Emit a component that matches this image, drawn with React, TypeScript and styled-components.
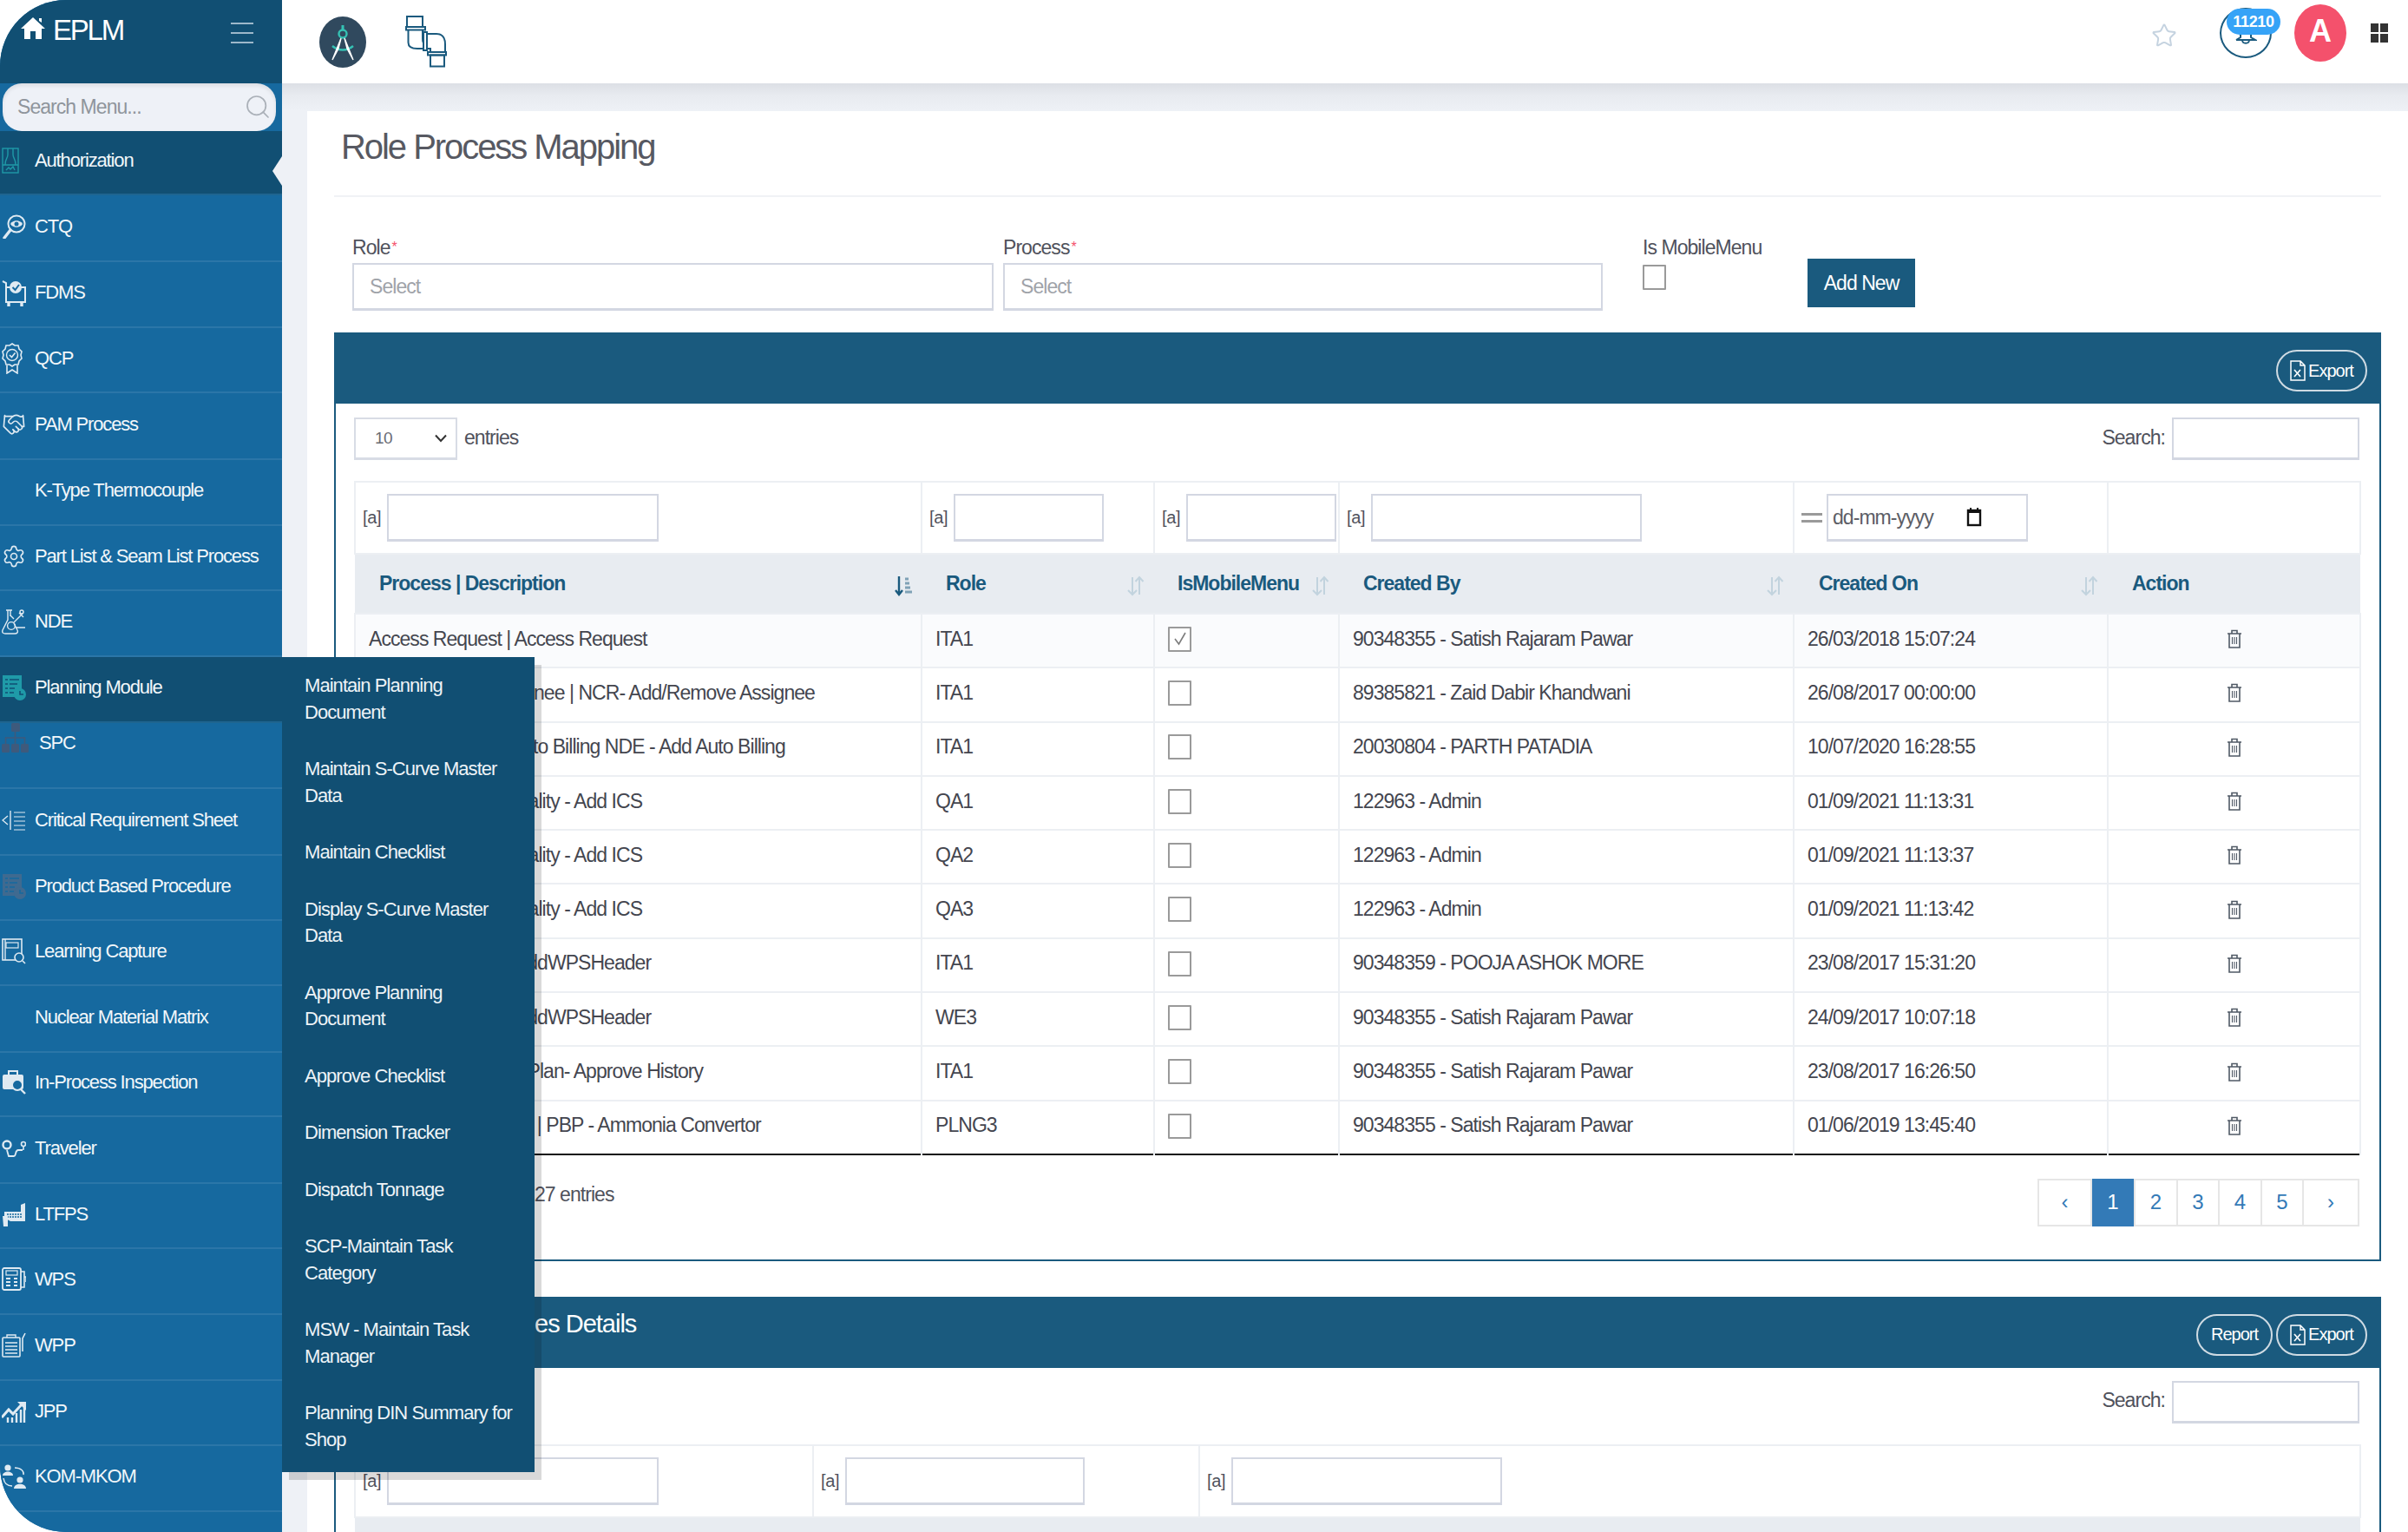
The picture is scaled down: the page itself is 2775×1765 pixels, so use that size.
import React from "react";
import styled, { createGlobalStyle } from "styled-components";
import { Handshake, Search, Settings, Star } from "lucide-react";

const Global = createGlobalStyle`
  html, body { margin: 0; padding: 0; width: 2775px; height: 1765px; overflow: hidden; background: #fff; }
  body, input, button { font-family: "Liberation Sans", Arial, sans-serif; }
  * { box-sizing: border-box; }
`;

const DARK = "#114f73";
const ITEM = "#16699f";
const BAND = "#1a5a7e";

const Page = styled.div`
  display: grid;
  grid-template-columns: 325px 1fr;
  width: 2775px;
  height: 1765px;
  overflow: hidden;
  background: #fff;
`;

/* ---------- sidebar ---------- */
const Sidebar = styled.aside`
  position: relative;
  z-index: 5;
  width: 325px;
  height: 1765px;
`;
const SideInner = styled.div`
  width: 325px;
  height: 1765px;
  overflow: hidden;
  border-radius: 76px 0 0 76px;
  background: ${ITEM};
  display: flex;
  flex-direction: column;
`;
const Brand = styled.div`
  height: 96px;
  flex: none;
  background: ${DARK};
  display: flex;
  align-items: flex-start;
  padding: 19px 33px 0 24px;
  color: #fff;
`;
const BrandName = styled.span`
  font-size: 33px;
  line-height: 32px;
  letter-spacing: -2.2px;
  margin-left: 9px;
  flex: 1;
`;
const Burger = styled.div`
  width: 26px;
  margin-top: 7px;
  display: flex;
  flex-direction: column;
  gap: 9px;
  & > i { display: block; height: 2px; background: #9db8ca; }
`;
const SearchStrip = styled.div`
  height: 55px;
  flex: none;
  padding: 0 7px 0 3px;
  position: relative;
`;
const SearchInput = styled.input`
  width: 100%;
  height: 55px;
  border: 0;
  outline: 0;
  border-radius: 22px;
  background: #eef1f7;
  box-shadow: inset 0 3px 4px rgba(0, 0, 0, 0.08);
  padding: 0 50px 0 17px;
  font-size: 23px;
  letter-spacing: -0.95px;
  &::placeholder { color: #8f959c; opacity: 1; }
`;
const SearchGlass = styled.span`
  position: absolute;
  right: 12px;
  top: 11px;
  color: #aab0b8;
  display: flex;
`;
const Item = styled.div<{ $active?: boolean; $top?: boolean; $h: number }>`
  position: relative;
  flex: none;
  height: ${(p) => p.$h}px;
  background: ${(p) => (p.$active ? DARK : ITEM)};
  border-bottom: 2px solid ${(p) => (p.$active ? "#1f6590" : "#2b76a8")};
  display: flex;
  align-items: ${(p) => (p.$top ? "flex-start" : "center")};
  padding: 0 0 ${(p) => (p.$top ? 0 : 4)}px 2px;
  color: #f2f7fa;
  font-size: 22px;
  letter-spacing: -1.15px;
`;
const IconSlot = styled.span<{ $wide?: boolean }>`
  width: ${(p) => (p.$wide ? 43 : 38)}px;
  flex: none;
  display: flex;
  align-items: center;
`;
const SpcLabel = styled.span`
  margin-top: 10px;
  line-height: 25px;
`;
const Notch = styled.i`
  position: absolute;
  right: 0;
  top: 29px;
  width: 11px;
  height: 34px;
  background: #eef1f6;
  clip-path: polygon(100% 0, 0 50%, 100% 100%);
`;
const Flyout = styled.nav`
  position: absolute;
  left: 325px;
  top: 757px;
  width: 291px;
  height: 939px;
  background: ${DARK};
  box-shadow: 8px 9px 0 rgba(0, 0, 0, 0.15);
  padding: 18px 0 0 26px;
  z-index: 6;
`;
const FlyLink = styled.div`
  width: 240px;
  padding-bottom: 35px;
  font-size: 22px;
  line-height: 30.5px;
  letter-spacing: -0.95px;
  color: #edf3f7;
`;

/* ---------- main ---------- */
const Main = styled.main`
  display: flex;
  flex-direction: column;
  min-width: 0;
  height: 1765px;
`;
const Topbar = styled.header`
  height: 96px;
  flex: none;
  display: flex;
  align-items: center;
  padding: 0 23px 0 43px;
  background: #fff;
  position: relative;
  z-index: 2;
`;
const TopLeft = styled.div`
  display: flex;
  align-items: center;
  gap: 45px;
  flex: 1;
`;
const TopRight = styled.div`
  display: flex;
  align-items: center;
  padding-bottom: 20px;
`;
const StarSlot = styled.span`
  display: flex;
  margin-top: 6px;
`;
const BellRing = styled.div`
  position: relative;
  width: 60px;
  height: 58px;
  margin: 0 26px 0 49px;
  border: 2px solid ${BAND};
  border-radius: 50%;
  display: flex;
  align-items: flex-end;
  justify-content: center;
  padding-bottom: 14px;
`;
const Badge = styled.span`
  position: absolute;
  left: 6px;
  top: -1px;
  width: 62px;
  height: 30px;
  border-radius: 15px;
  background: #36a3f7;
  color: #fff;
  font-size: 18px;
  font-weight: 700;
  letter-spacing: -0.3px;
  line-height: 30px;
  text-align: center;
`;
const Avatar = styled.div`
  width: 60px;
  height: 66px;
  border-radius: 50%;
  background: #f4516c;
  color: #fff;
  font-size: 36px;
  font-weight: 700;
  line-height: 62px;
  text-align: center;
  margin-right: 28px;
`;
const Squares = styled.div`
  width: 20px;
  height: 22px;
  display: grid;
  grid-template: 1fr 1fr / 1fr 1fr;
  gap: 2px;
  & > i { background: #333; display: block; }
`;
const Canvas = styled.div`
  flex: 1;
  min-height: 0;
  background: linear-gradient(#dcdfe5 0, #e8ebf0 14px, #eef1f6 32px);
  padding: 32px 0 0 29px;
`;
const Card = styled.div`
  background: #fff;
  height: 100%;
  padding: 0 31px 0 31px;
  overflow: hidden;
`;
const Title = styled.h1`
  margin: 0;
  height: 99px;
  padding: 20px 0 0 8px;
  border-bottom: 2px solid #f0f2f5;
  font-size: 40px;
  line-height: 42px;
  font-weight: 400;
  letter-spacing: -2.05px;
  color: #575962;
`;
const FormRow = styled.div`
  height: 156px;
  padding: 45px 0 0 21px;
  display: flex;
`;
const Field = styled.div<{ $w: number; $mr: number }>`
  width: ${(p) => p.$w}px;
  margin-right: ${(p) => p.$mr}px;
  flex: none;
`;
const Label = styled.div<{ $h?: number }>`
  height: ${(p) => p.$h ?? 31}px;
  font-size: 23px;
  line-height: 26px;
  letter-spacing: -0.95px;
  color: #50525c;
`;
const Req = styled.span`
  color: #f4516c;
  font-size: 16px;
  vertical-align: 3px;
  margin-left: 2px;
`;
const BaseInput = styled.input`
  display: block;
  border: 2px solid #d3d7e2;
  border-bottom-width: 3px;
  background: #fff;
  outline: 0;
  font-size: 23px;
  letter-spacing: -0.95px;
  &::placeholder { color: #a0a3a9; opacity: 1; }
`;
const SelectInput = styled(BaseInput)`
  width: 100%;
  height: 55px;
  padding: 0 18px;
`;
const Check = styled.span`
  display: inline-flex;
  align-items: center;
  justify-content: center;
  width: 27px;
  height: 29px;
  border: 2px solid #9a9a9a;
  border-radius: 1px;
  background: #fff;
  vertical-align: middle;
`;
const AddButton = styled.button`
  width: 124px;
  height: 56px;
  margin-top: 26px;
  flex: none;
  border: 0;
  background: ${BAND};
  color: #fff;
  font-size: 23px;
  letter-spacing: -0.95px;
`;
const Panel = styled.section<{ $gap?: number }>`
  margin-top: ${(p) => p.$gap ?? 0}px;
  width: 2359px;
`;
const PanelHead = styled.div`
  height: 82px;
  background: ${BAND};
  display: flex;
  align-items: center;
  justify-content: flex-end;
  gap: 4px;
  padding: 6px 16px 0 52px;
`;
const PanelTitle = styled.h2`
  margin: 0 auto 26px 0;
  font-size: 29px;
  line-height: 34px;
  font-weight: 400;
  letter-spacing: -1px;
  color: #fff;
`;
const Pill = styled.button<{ $w: number }>`
  width: ${(p) => p.$w}px;
  height: 48px;
  border: 2px solid #cfdbe3;
  border-radius: 24px;
  background: transparent;
  color: #fff;
  font-size: 20px;
  letter-spacing: -1px;
  display: inline-flex;
  align-items: center;
  justify-content: center;
  gap: 3px;
  padding: 0;
`;
const PanelBody = styled.div<{ $top: number }>`
  border: 2px solid ${BAND};
  border-top: 0;
  padding: ${(p) => p.$top}px 23px 38px 21px;
`;
const Controls = styled.div`
  height: 49px;
  display: flex;
  align-items: center;
  justify-content: space-between;
  margin-bottom: 24px;
  font-size: 23px;
  letter-spacing: -0.95px;
  color: #50525c;
`;
const ControlText = styled.span`
  margin-bottom: 3px;
`;
const Group = styled.div`
  display: flex;
  align-items: center;
  gap: 8px;
`;
const EntrySelect = styled.div`
  width: 119px;
  height: 49px;
  border: 2px solid #d8dce5;
  border-bottom-width: 3px;
  display: flex;
  align-items: center;
  justify-content: space-between;
  padding: 0 10px 0 22px;
  font-size: 19px;
  letter-spacing: -0.5px;
  color: #6a6c75;
`;
const SearchBox = styled(BaseInput)`
  width: 216px;
  height: 49px;
`;
const Table = styled.table`
  width: 2311px;
  table-layout: fixed;
  border-collapse: collapse;
  font-size: 23px;
  letter-spacing: -0.95px;
  color: #44464f;
`;
const Col = styled.col<{ $w: number }>`
  width: ${(p) => p.$w}px;
`;
const FilterRow = styled.tr`
  height: 83px;
`;
const FilterCell = styled.td`
  border: 2px solid #eceff3;
  padding: 0 0 0 8px;
`;
const FilterInner = styled.div<{ $gap?: number }>`
  display: flex;
  align-items: center;
  gap: ${(p) => p.$gap ?? 7}px;
  font-size: 20px;
  letter-spacing: -0.4px;
  color: #50525c;
`;
const FilterInput = styled(BaseInput)<{ $w: number }>`
  width: ${(p) => p.$w}px;
  height: 55px;
`;
const DateBox = styled.div`
  width: 232px;
  height: 55px;
  border: 2px solid #d3d7e2;
  border-bottom-width: 3px;
  display: flex;
  align-items: center;
  padding-left: 5px;
  gap: 38px;
  font-size: 23px;
  letter-spacing: -0.95px;
  color: #5c5e66;
`;
const Equal = styled.span`
  width: 24px;
  height: 11px;
  border-top: 3px solid #9a9a9a;
  border-bottom: 3px solid #9a9a9a;
`;
const HeadRow = styled.tr`
  height: 69px;
  background: #e8ecf1;
`;
const Th = styled.th<{ $pl: number }>`
  position: relative;
  padding: 0 0 1px ${(p) => p.$pl}px;
  text-align: left;
  color: ${BAND};
  font-weight: 700;
  letter-spacing: -1px;
`;
const SortIcon = styled.span`
  position: absolute;
  right: 11px;
  top: 24px;
  display: flex;
`;
const BodyRow = styled.tr<{ $first?: boolean; $last?: boolean }>`
  height: 62.3px;
  background: ${(p) => (p.$first ? "#fafbfd" : "#fff")};
  ${(p) => (p.$last ? "border-bottom: 2px solid #111;" : "")}
`;
const Td = styled.td<{ $center?: boolean }>`
  border-left: 2px solid #eceff3;
  border-right: 2px solid #eceff3;
  border-top: 2px solid #eceff3;
  padding: 0 0 4px 15px;
  white-space: nowrap;
  overflow: hidden;
  ${(p) => (p.$center ? "padding: 0 0 4px 0;" : "")}
`;
const TrashSlot = styled.span`
  display: flex;
  justify-content: center;
`;
const Footer = styled.div`
  margin-top: 27px;
  height: 55px;
  display: flex;
  align-items: flex-start;
  justify-content: space-between;
  font-size: 23px;
  letter-spacing: -0.95px;
  color: #50525c;
`;
const Info = styled.div`
  margin-top: 5px;
`;
const Pager = styled.div`
  display: flex;
  height: 55px;
  border: 2px solid #e6e6e6;
`;
const PageCell = styled.div<{ $w: number; $on?: boolean }>`
  width: ${(p) => p.$w}px;
  display: flex;
  align-items: center;
  justify-content: center;
  font-size: 24px;
  letter-spacing: 0;
  color: ${(p) => (p.$on ? "#fff" : "#337ab7")};
  background: ${(p) => (p.$on ? "#337ab7" : "#fff")};
  border-right: 2px solid #e6e6e6;
  margin: ${(p) => (p.$on ? "-2px 0" : "0")};
  &:last-child { border-right: 0; }
`;
const HeadFill = styled.tr`
  height: 60px;
  background: #e8ecf1;
`;

/* ---------- icons ---------- */
const W = "#dfeaf2";
const TEAL = "#1f9aa8";

const Svg: React.FC<{ w?: number; h?: number; vb?: string; children: React.ReactNode }> = ({
  w = 28,
  h = 28,
  vb,
  children,
}) => (
  <svg width={w} height={h} viewBox={vb ?? `0 0 ${w} ${h}`} fill="none" style={{ display: "block" }}>
    {children}
  </svg>
);

const HomeIcon = () => (
  <Svg w={28} h={26}>
    <path d="M14 1 L28 14 H24 V26 H17 V17 H11 V26 H4 V14 H0 Z" fill="#fff" />
    <path d="M21 2 H24 V7 L21 5 Z" fill="#fff" />
  </Svg>
);
const AuthIcon = () => (
  <Svg w={20} h={30}>
    <g stroke={TEAL} strokeWidth="1.4">
      <rect x="1" y="1" width="18" height="28" />
      <path d="M7 1 V8 C7 13 4 12 4 20 M13 1 V8 C13 13 16 12 16 20 M1 20 H19" />
      <path d="M5 26 L8 23 L10 25 L13 22 L15 26" />
    </g>
  </Svg>
);
const CtqIcon = () => (
  <Svg>
    <circle cx="17" cy="11" r="9.5" stroke={W} strokeWidth="2" />
    <path d="M10 11 C13 6 21 6 24 11 C21 16 13 16 10 11 Z" fill={W} />
    <circle cx="17" cy="11" r="2.5" fill={ITEM} />
    <path d="M10 18 L3 27" stroke={W} strokeWidth="3.4" strokeLinecap="round" />
  </Svg>
);
const FdmsIcon = () => (
  <Svg h={32}>
    <path d="M1 3 L5 5 V27 H27 V10 H22 M11 10 H5" stroke={W} strokeWidth="2" />
    <circle cx="16" cy="10" r="7" fill={W} />
    <path d="M12.5 10 L15.5 13 L20 7" stroke={ITEM} strokeWidth="2" />
    <path d="M8 28 V32 M23 28 V32" stroke={W} strokeWidth="3.4" />
  </Svg>
);
const QcpIcon = () => (
  <Svg w={24} h={36} vb="0 0 24 36">
    <path d="M12 1 L15 3 L19 3 L20 7 L23 10 L22 14 L23 18 L20 21 L19 25 L15 25 L12 27 L9 25 L5 25 L4 21 L1 18 L2 14 L1 10 L4 7 L5 3 L9 3 Z" stroke={W} strokeWidth="1.6" />
    <circle cx="12" cy="14" r="6.5" stroke={W} strokeWidth="1.4" />
    <path d="M9 14 L11.5 16.5 L15.5 11.5" stroke={W} strokeWidth="1.6" />
    <path d="M6 26 V35 L12 31 L18 35 V26" stroke={W} strokeWidth="1.6" />
  </Svg>
);
const NdeIcon = () => (
  <Svg h={30}>
    <g stroke={W} strokeWidth="1.4">
      <path d="M5 2 H12 M7 2 V13 L1 25 C0 28 2 29 4 29 H15 C18 29 19 27 18 25 L14 17 M10 2 V9" />
      <circle cx="11" cy="20" r="4.4" />
      <path d="M14 16 L24 6 M20 5 L25 10 M16 22 H27 M14 12 L10 8" />
      <circle cx="23" cy="4" r="2" />
    </g>
  </Svg>
);
const CriticalIcon = () => (
  <Svg>
    <path d="M7 9 L1 14 L7 19" stroke={W} strokeWidth="1.4" />
    <path d="M10 3 V25" stroke={W} strokeWidth="1.4" />
    <path d="M14 5 H27 M14 10 H27 M14 15 H27 M14 20 H27 M14 25 H27" stroke={W} strokeWidth="1.2" />
  </Svg>
);
const DocClock: React.FC<{ c: string; bg: string }> = ({ c, bg }) => (
  <Svg h={30}>
    <rect x="1" y="1" width="22" height="25" fill={c} />
    <path d="M4 6 H7 M9 6 H20 M4 11 H7 M9 11 H18 M4 16 H7 M9 16 H15 M4 21 H7 M9 21 H14" stroke={bg} strokeWidth="1.6" />
    <circle cx="21" cy="23" r="7" fill={c} />
    <path d="M21 19 V23 H25" stroke={bg} strokeWidth="1.6" />
  </Svg>
);
const SpcIcon = () => (
  <Svg w={31} h={34}>
    <g fill="#3e5a7c">
      <rect x="11" y="0" width="10" height="10" rx="1.5" />
      <rect x="0" y="24" width="9" height="10" rx="1.5" />
      <rect x="11" y="24" width="9" height="10" rx="1.5" />
      <rect x="22" y="24" width="9" height="10" rx="1.5" />
    </g>
    <path d="M15.5 10 V24 M4.5 24 V17 H26.5 V24" stroke="#3e5a7c" strokeWidth="1.6" />
  </Svg>
);
const LearnIcon = () => (
  <Svg h={30}>
    <rect x="1" y="1" width="22" height="24" stroke={W} strokeWidth="1.6" />
    <rect x="5" y="5" width="14" height="6" stroke={W} strokeWidth="1.2" />
    <path d="M4 1 V25" stroke={W} strokeWidth="1.4" />
    <circle cx="20" cy="22" r="5" fill={ITEM} stroke={W} strokeWidth="1.6" />
    <path d="M24 26 L27 29" stroke={W} strokeWidth="1.6" />
  </Svg>
);
const InProcessIcon = () => (
  <Svg h={30}>
    <path d="M8 6 V2 H18 V6" stroke={W} strokeWidth="2" />
    <rect x="1" y="6" width="24" height="17" rx="2" fill={W} />
    <circle cx="18" cy="18" r="6" fill={ITEM} stroke={W} strokeWidth="2" />
    <path d="M22 23 L27 28" stroke={W} strokeWidth="2.4" />
  </Svg>
);
const TravelerIcon = () => (
  <Svg h={24}>
    <circle cx="6" cy="8" r="4.5" stroke={W} strokeWidth="2.4" />
    <path d="M6 14 L8 21 H14 C17 21 15 14 19 14 H24" stroke={W} strokeWidth="1.8" />
    <circle cx="25" cy="7" r="2.5" stroke={W} strokeWidth="1.6" />
    <path d="M25 10 V14" stroke={W} strokeWidth="1.6" />
  </Svg>
);
const LtfpsIcon = () => (
  <Svg h={30}>
    <path d="M3 12 H27 V23 H10 L3 19 Z" fill={W} />
    <path d="M6 15 H24 M6 18 H24" stroke={ITEM} strokeWidth="1.6" strokeDasharray="2 1" />
    <path d="M22 12 V4 L27 2 V12 Z M1 17 H7 V29 H2 Z" fill={W} />
  </Svg>
);
const WpsIcon = () => (
  <Svg h={30}>
    <rect x="1" y="2" width="21" height="25" rx="2" stroke={W} strokeWidth="1.8" />
    <rect x="5" y="5" width="13" height="5" stroke={W} strokeWidth="1.2" />
    <path d="M5 14 H10 M5 18 H10 M5 22 H10 M14 14 H18 M14 18 H18 M14 22 H18" stroke={W} strokeWidth="2" />
    <path d="M22 6 H26 V24 H22 M26 12 H28 V18" stroke={W} strokeWidth="1.6" />
  </Svg>
);
const WppIcon = () => (
  <Svg h={30}>
    <rect x="1" y="6" width="20" height="22" rx="1" stroke={W} strokeWidth="1.6" />
    <path d="M6 6 V3 H16 V6" stroke={W} strokeWidth="1.4" />
    <path d="M4 12 H18 M4 16 H18 M4 20 H18 M4 24 H18" stroke={W} strokeWidth="1.4" />
    <path d="M24 22 V7 L27 1" stroke={W} strokeWidth="1.6" />
  </Svg>
);
const JppIcon = () => (
  <Svg h={26}>
    <path d="M0 20 L8 11 L13 16 L23 5" stroke={W} strokeWidth="3" />
    <path d="M18 2 H28 V12 Z" fill={W} />
    <path d="M7 26 V20 M12 26 V20 M17 26 V15 M22 26 V11 M26 26 V9" stroke={W} strokeWidth="2.4" />
  </Svg>
);
const KomIcon = () => (
  <Svg h={30}>
    <circle cx="7" cy="5" r="3.6" fill={W} />
    <path d="M1 14 C1 8 13 8 13 14 Z" fill={W} />
    <circle cx="21" cy="19" r="3.6" fill={W} />
    <path d="M14 29 C14 22 28 22 28 29 Z" fill={W} />
    <path d="M15 5 C22 5 26 9 25 13 M2 17 C3 24 8 26 12 26" stroke={W} strokeWidth="1.5" />
  </Svg>
);
const CompassBadge = () => (
  <Svg w={54} h={59}>
    <ellipse cx="27" cy="29.5" rx="27" ry="29.5" fill="#30495e" />
    <circle cx="27" cy="20" r="4.5" stroke="#35c2b4" strokeWidth="2.4" />
    <path d="M27 10 V15" stroke="#35c2b4" strokeWidth="3" />
    <path d="M15 34 C22 40 32 40 39 34" stroke="#35c2b4" strokeWidth="2.4" />
    <path d="M25 25 L15 50 L22 37 Z M29 25 L39 50 L32 37 Z" fill="#fff" stroke="#fff" strokeWidth="1.4" />
  </Svg>
);
const PipeIcon = () => (
  <Svg w={48} h={60}>
    <g stroke={BAND} strokeWidth="2">
      <rect x="2" y="1" width="18" height="12" />
      <rect x="1" y="13" width="22" height="3.5" />
      <path d="M3.5 16.5 V31 Q3.5 38 14 38 H21 M20 16.5 V26 Q20 31 21 31" />
      <rect x="21" y="19" width="4" height="21" />
      <path d="M25 21 H36 Q46 21 46 33 V42 M25 38 H29 V42" />
      <rect x="26" y="42" width="21" height="3.5" />
      <rect x="29" y="45.5" width="16" height="13" />
    </g>
  </Svg>
);
const BellIcon = () => (
  <Svg w={26} h={16}>
    <path d="M2 11 H24 L19 8 V3 M7 3 V8 L2 11" stroke={BAND} strokeWidth="2" />
    <path d="M9 11 C9 16 17 16 17 11" stroke={BAND} strokeWidth="1.8" />
  </Svg>
);
const ExcelIcon = () => (
  <Svg w={18} h={24}>
    <path d="M1 1 H12 L17 6 V23 H1 Z M12 1 V6 H17" stroke="#fff" strokeWidth="1.5" />
    <path d="M5 11 L12 19 M12 11 L5 19" stroke="#fff" strokeWidth="1.6" />
  </Svg>
);
const TrashIcon = () => (
  <Svg w={16} h={22}>
    <g stroke="#505a66" strokeWidth="1.6">
      <path d="M0 5 H16 M5 5 V1.5 H11 V5" />
      <path d="M2 5 V21 H14 V5" />
      <path d="M5.5 9 V17 M8 9 V17 M10.5 9 V17" strokeWidth="1.1" />
    </g>
  </Svg>
);
const SortIdle = () => (
  <Svg w={20} h={24}>
    <g stroke="#c2d3de" strokeWidth="2">
      <path d="M6 2 V22 M1 17 L6 22 L11 17" />
      <path d="M14 22 V2 M9.5 7 L14 2 L18.5 7" />
    </g>
  </Svg>
);
const SortActive = () => (
  <Svg w={20} h={24}>
    <path d="M5 1 V22 M1 17 L5 22 L9 17" stroke={BAND} strokeWidth="2.4" />
    <path d="M12 4 H16 M12 9 H17 M12 14 H18 M12 19 H20" stroke="#7fa1b6" strokeWidth="3" />
  </Svg>
);
const TickIcon = () => (
  <Svg w={18} h={18}>
    <path d="M3 9 L7.5 15 L15 2" stroke="#7c7c7c" strokeWidth="1.6" />
  </Svg>
);
const Chevron = () => (
  <Svg w={14} h={10}>
    <path d="M1 1.5 L7 8 L13 1.5" stroke="#333" strokeWidth="2" />
  </Svg>
);
const CalendarIcon = () => (
  <Svg w={18} h={22}>
    <rect x="2" y="3" width="14" height="17" stroke="#111" strokeWidth="2.4" fill="#fff" />
    <path d="M2 4 H16" stroke="#111" strokeWidth="4" />
    <path d="M5 0 V3 M13 0 V3" stroke="#111" strokeWidth="2" />
  </Svg>
);

const stroke = { color: W, strokeWidth: 1.4 };
const nav: { label: string; icon?: React.ReactNode; active?: boolean; top?: boolean; h: number }[] = [
  { label: "Authorization", icon: <AuthIcon />, active: true, h: 74 },
  { label: "CTQ", icon: <CtqIcon />, h: 77 },
  { label: "FDMS", icon: <FdmsIcon />, h: 76 },
  { label: "QCP", icon: <QcpIcon />, h: 75 },
  { label: "PAM Process", icon: <Handshake size={28} {...stroke} />, h: 77 },
  { label: "K-Type Thermocouple", h: 76 },
  { label: "Part List & Seam List Process", icon: <Settings size={28} {...stroke} />, h: 75 },
  { label: "NDE", icon: <NdeIcon />, h: 76 },
  { label: "Planning Module", icon: <DocClock c={TEAL} bg={DARK} />, active: true, h: 76 },
  { label: "SPC", icon: <SpcIcon />, top: true, h: 76 },
  { label: "Critical Requirement Sheet", icon: <CriticalIcon />, h: 77 },
  { label: "Product Based Procedure", icon: <DocClock c="#3f6a90" bg={ITEM} />, h: 75 },
  { label: "Learning Capture", icon: <LearnIcon />, h: 75 },
  { label: "Nuclear Material Matrix", h: 77 },
  { label: "In-Process Inspection", icon: <InProcessIcon />, h: 74 },
  { label: "Traveler", icon: <TravelerIcon />, h: 77 },
  { label: "LTFPS", icon: <LtfpsIcon />, h: 75 },
  { label: "WPS", icon: <WpsIcon />, h: 76 },
  { label: "WPP", icon: <WppIcon />, h: 76 },
  { label: "JPP", icon: <JppIcon />, h: 75 },
  { label: "KOM-MKOM", icon: <KomIcon />, h: 76 },
  { label: "", h: 76 },
];

const fly = [
  "Maintain Planning Document",
  "Maintain S-Curve Master Data",
  "Maintain Checklist",
  "Display S-Curve Master Data",
  "Approve Planning Document",
  "Approve Checklist",
  "Dimension Tracker",
  "Dispatch Tonnage",
  "SCP-Maintain Task Category",
  "MSW - Maintain Task Manager",
  "Planning DIN Summary for Shop",
];

const rows = [
  ["Access Request | Access Request", "ITA1", true, "90348355 - Satish Rajaram Pawar", "26/03/2018 15:07:24"],
  ["Add / Remove Assignee | NCR- Add/Remove Assignee", "ITA1", false, "89385821 - Zaid Dabir Khandwani", "26/08/2017 00:00:00"],
  ["NDE Billing | Add Auto Billing NDE - Add Auto Billing", "ITA1", false, "20030804 - PARTH PATADIA", "10/07/2020 16:28:55"],
  ["Add ICS Quality Quality - Add ICS", "QA1", false, "122963 - Admin", "01/09/2021 11:13:31"],
  ["Add ICS Quality Quality - Add ICS", "QA2", false, "122963 - Admin", "01/09/2021 11:13:37"],
  ["Add ICS Quality Quality - Add ICS", "QA3", false, "122963 - Admin", "01/09/2021 11:13:42"],
  ["AddWPSHeader |AddWPSHeader", "ITA1", false, "90348359 - POOJA ASHOK MORE", "23/08/2017 15:31:20"],
  ["AddWPSHeader |AddWPSHeader", "WE3", false, "90348355 - Satish Rajaram Pawar", "24/09/2017 10:07:18"],
  ["A Approve History | Plan- Approve History", "ITA1", false, "90348355 - Satish Rajaram Pawar", "23/08/2017 16:26:50"],
  ["Ammonia Convertor | PBP - Ammonia Convertor", "PLNG3", false, "90348355 - Satish Rajaram Pawar", "01/06/2019 13:45:40"],
] as const;

const heads: { label: string; pl: number; active?: boolean; noSort?: boolean }[] = [
  { label: "Process | Description", pl: 28, active: true },
  { label: "Role", pl: 28 },
  { label: "IsMobileMenu", pl: 27 },
  { label: "Created By", pl: 28 },
  { label: "Created On", pl: 29 },
  { label: "Action", pl: 28, noSort: true },
];

const ExportBtn = () => (
  <Pill $w={105}>
    <ExcelIcon />
    Export
  </Pill>
);

export default function App() {
  return (
    <>
      <Global />
      <Page>
        <Sidebar>
          <SideInner>
            <Brand>
              <HomeIcon />
              <BrandName>EPLM</BrandName>
              <Burger>
                <i />
                <i />
                <i />
              </Burger>
            </Brand>
            <SearchStrip>
              <SearchInput placeholder="Search Menu..." />
              <SearchGlass>
                <Search size={32} strokeWidth={1.3} />
              </SearchGlass>
            </SearchStrip>
            {nav.map((n, i) => (
              <Item key={i} $active={n.active} $top={n.top} $h={n.h}>
                <IconSlot $wide={n.top}>{n.icon}</IconSlot>
                {n.top ? <SpcLabel>{n.label}</SpcLabel> : n.label}
                {i === 0 && <Notch />}
              </Item>
            ))}
          </SideInner>
          <Flyout>
            {fly.map((f) => (
              <FlyLink key={f}>{f}</FlyLink>
            ))}
          </Flyout>
        </Sidebar>
        <Main>
          <Topbar>
            <TopLeft>
              <CompassBadge />
              <PipeIcon />
            </TopLeft>
            <TopRight>
              <StarSlot>
                <Star size={30} strokeWidth={1.6} color="#c5d3e0" />
              </StarSlot>
              <BellRing>
                <BellIcon />
                <Badge>11210</Badge>
              </BellRing>
              <Avatar>A</Avatar>
              <Squares>
                <i />
                <i />
                <i />
                <i />
              </Squares>
            </TopRight>
          </Topbar>
          <Canvas>
            <Card>
              <Title>Role Process Mapping</Title>
              <FormRow>
                <Field $w={739} $mr={11}>
                  <Label>
                    Role<Req>*</Req>
                  </Label>
                  <SelectInput placeholder="Select" />
                </Field>
                <Field $w={691} $mr={46}>
                  <Label>
                    Process<Req>*</Req>
                  </Label>
                  <SelectInput placeholder="Select" />
                </Field>
                <Field $w={190} $mr={0}>
                  <Label $h={33}>Is MobileMenu</Label>
                  <Check />
                </Field>
                <AddButton>Add New</AddButton>
              </FormRow>
              <Panel>
                <PanelHead>
                  <ExportBtn />
                </PanelHead>
                <PanelBody $top={16}>
                  <Controls>
                    <Group>
                      <EntrySelect>
                        10
                        <Chevron />
                      </EntrySelect>
                      <ControlText>entries</ControlText>
                    </Group>
                    <Group>
                      <ControlText>Search:</ControlText>
                      <SearchBox />
                    </Group>
                  </Controls>
                  <Table>
                    <colgroup>
                      <Col $w={653} />
                      <Col $w={268} />
                      <Col $w={213} />
                      <Col $w={524} />
                      <Col $w={362} />
                      <Col $w={291} />
                    </colgroup>
                    <thead>
                      <FilterRow>
                        <FilterCell>
                          <FilterInner>
                            [a]
                            <FilterInput $w={313} />
                          </FilterInner>
                        </FilterCell>
                        <FilterCell>
                          <FilterInner>
                            [a]
                            <FilterInput $w={173} />
                          </FilterInner>
                        </FilterCell>
                        <FilterCell>
                          <FilterInner>
                            [a]
                            <FilterInput $w={173} />
                          </FilterInner>
                        </FilterCell>
                        <FilterCell>
                          <FilterInner>
                            [a]
                            <FilterInput $w={312} />
                          </FilterInner>
                        </FilterCell>
                        <FilterCell>
                          <FilterInner $gap={5}>
                            <Equal />
                            <DateBox>
                              dd-mm-yyyy
                              <CalendarIcon />
                            </DateBox>
                          </FilterInner>
                        </FilterCell>
                        <FilterCell />
                      </FilterRow>
                      <HeadRow>
                        {heads.map((h) => (
                          <Th key={h.label} $pl={h.pl}>
                            {h.label}
                            {!h.noSort && <SortIcon>{h.active ? <SortActive /> : <SortIdle />}</SortIcon>}
                          </Th>
                        ))}
                      </HeadRow>
                    </thead>
                    <tbody>
                      {rows.map((r, i) => (
                        <BodyRow key={i} $first={i === 0} $last={i === rows.length - 1}>
                          <Td>{r[0]}</Td>
                          <Td>{r[1]}</Td>
                          <Td>
                            <Check>{r[2] && <TickIcon />}</Check>
                          </Td>
                          <Td>{r[3]}</Td>
                          <Td>{r[4]}</Td>
                          <Td $center>
                            <TrashSlot>
                              <TrashIcon />
                            </TrashSlot>
                          </Td>
                        </BodyRow>
                      ))}
                    </tbody>
                  </Table>
                  <Footer>
                    <Info>Showing 1 to 10 of 1,227 entries</Info>
                    <Pager>
                      <PageCell $w={61}>‹</PageCell>
                      <PageCell $w={50} $on>
                        1
                      </PageCell>
                      <PageCell $w={49}>2</PageCell>
                      <PageCell $w={48}>3</PageCell>
                      <PageCell $w={49}>4</PageCell>
                      <PageCell $w={48}>5</PageCell>
                      <PageCell $w={62}>›</PageCell>
                    </Pager>
                  </Footer>
                </PanelBody>
              </Panel>
              <Panel $gap={41}>
                <PanelHead>
                  <PanelTitle>Process Activities Details</PanelTitle>
                  <Pill $w={88}>Report</Pill>
                  <ExportBtn />
                </PanelHead>
                <PanelBody $top={15}>
                  <Controls>
                    <Group>
                      <EntrySelect>
                        10
                        <Chevron />
                      </EntrySelect>
                      <ControlText>entries</ControlText>
                    </Group>
                    <Group>
                      <ControlText>Search:</ControlText>
                      <SearchBox />
                    </Group>
                  </Controls>
                  <Table>
                    <colgroup>
                      <Col $w={528} />
                      <Col $w={445} />
                      <Col $w={1338} />
                    </colgroup>
                    <thead>
                      <FilterRow>
                        <FilterCell>
                          <FilterInner>
                            [a]
                            <FilterInput $w={313} />
                          </FilterInner>
                        </FilterCell>
                        <FilterCell>
                          <FilterInner>
                            [a]
                            <FilterInput $w={276} />
                          </FilterInner>
                        </FilterCell>
                        <FilterCell>
                          <FilterInner>
                            [a]
                            <FilterInput $w={312} />
                          </FilterInner>
                        </FilterCell>
                      </FilterRow>
                      <HeadFill>
                        <th />
                        <th />
                        <th />
                      </HeadFill>
                    </thead>
                  </Table>
                </PanelBody>
              </Panel>
            </Card>
          </Canvas>
        </Main>
      </Page>
    </>
  );
}
